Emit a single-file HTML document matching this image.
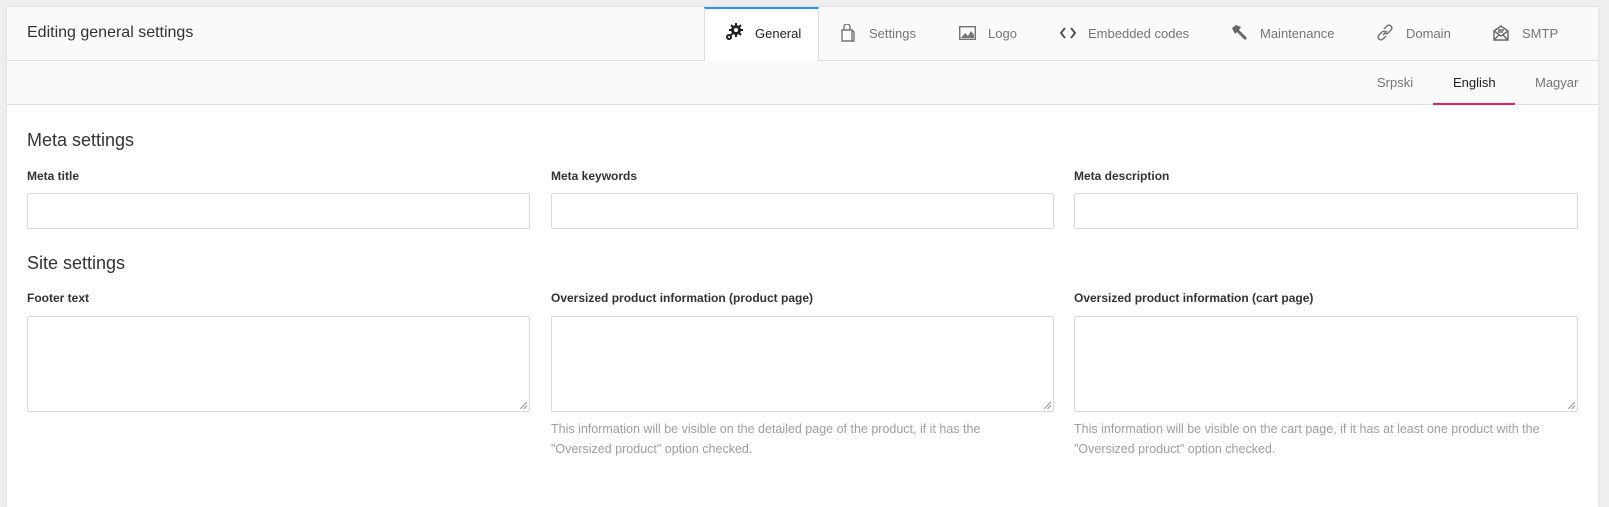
<!DOCTYPE html>
<html><head><meta charset="utf-8"><style>
*{box-sizing:border-box;margin:0;padding:0}
body{width:1609px;height:493px;background:#eeeeee;font-family:"Liberation Sans",sans-serif;position:relative;overflow:hidden;color:#212121}
.card{position:absolute;left:7px;top:7px;width:1591px;height:500px;background:#fff;box-shadow:0 0 2px rgba(0,0,0,.12)}
.hdr{position:absolute;left:0;top:0;width:100%;height:54px;background:#fafafa;border-bottom:1px solid #dedede}
.sub{position:absolute;left:0;top:54px;width:100%;height:44px;background:#fafafa;border-bottom:1px solid #dedede}
.abs{position:absolute;white-space:nowrap}
.title{left:20px;top:17px;font-size:16px;color:#333}
.tab{font-size:13px;color:#757575;top:19px}
.icon{position:absolute;top:18px}
.act{position:absolute;left:697px;top:0;width:115px;height:55px;background:#fff;border-left:1px solid #dedede;border-right:1px solid #dedede;border-top:2px solid #2196f3}
.lang{font-size:13px;color:#757575;top:68px}
h3{position:absolute;font-weight:normal;font-size:18px;color:#333;left:20px}
.lbl{position:absolute;font-size:12px;font-weight:bold;color:#333}
.inp{position:absolute;border:1px solid #d9d9d9;border-radius:2px;background:#fff}
.help{position:absolute;font-size:12.5px;color:#9e9e9e;line-height:20px}
.grip{position:absolute;right:2px;bottom:2px;width:7px;height:7px;background:linear-gradient(135deg,transparent 45%,#999 45%,#999 55%,transparent 55%,transparent 70%,#999 70%,#999 80%,transparent 80%)}
</style></head><body>
<div class="card">
<div class="hdr"></div>
<div class="act"></div>
<div class="sub"></div>
<div class="abs title">Editing general settings</div>

<svg class="icon" style="left:717px;top:15px" width="20" height="20" viewBox="0 0 20 20"><g fill="#222"><circle cx="12" cy="8" r="5"/><circle cx="5" cy="15" r="3"/></g><g stroke="#222" stroke-width="2"><path d="M12 1v14M5 8h14M7 3l10 10M17 3L7 13"/></g><circle cx="12" cy="8" r="2" fill="#fff"/><circle cx="5" cy="15" r="1" fill="#fff"/></svg>
<div class="abs tab" style="left:748px;color:#212121">General</div>

<svg class="icon" style="left:833px;top:17px" width="16" height="18" viewBox="0 0 16 18"><g fill="none" stroke="#757575" stroke-width="1.4"><path d="M2 6h10v11H2z"/><path d="M12 6l2 2v9h-2"/><path d="M4 6V3a3 3 0 0 1 6 0v3"/></g></svg>
<div class="abs tab" style="left:862px">Settings</div>

<svg class="icon" style="left:952px;top:19px" width="17" height="14" viewBox="0 0 17 14"><rect x=".7" y=".7" width="15.6" height="12.6" fill="none" stroke="#757575" stroke-width="1.4"/><path d="M2 12L6 7l3 3 3-5 3 4v3z" fill="#757575"/></svg>
<div class="abs tab" style="left:981px">Logo</div>

<svg class="icon" style="left:1053px;top:20px" width="16" height="12" viewBox="0 0 16 12"><path d="M5 1L1 6l4 5M11 1l4 5-4 5" fill="none" stroke="#555" stroke-width="2"/></svg>
<div class="abs tab" style="left:1081px">Embedded codes</div>

<svg class="icon" style="left:1224px;top:17px" width="17" height="17" viewBox="0 0 17 17"><path d="M1 4l4-3 5 2-2 3 8 8-2 2-8-8-2 2z" fill="#666"/></svg>
<div class="abs tab" style="left:1253px">Maintenance</div>

<svg class="icon" style="left:1370px;top:17px" width="16" height="17" viewBox="0 0 16 17"><g fill="none" stroke="#757575" stroke-width="1.5"><path d="M7 5l3-3a2.5 2.5 0 0 1 4 4l-3 3a2.5 2.5 0 0 1-3.5 0"/><path d="M9 12l-3 3a2.5 2.5 0 0 1-4-4l3-3a2.5 2.5 0 0 1 3.5 0"/><path d="M6 11l4-4"/></g></svg>
<div class="abs tab" style="left:1399px">Domain</div>

<svg class="icon" style="left:1486px;top:17px" width="16" height="17" viewBox="0 0 16 17"><g fill="none" stroke="#666" stroke-width="1.4"><path d="M1 7l7-5 7 5v9H1z"/><path d="M1 7l7 5 7-5M1 16l5-5M15 16l-5-5"/><path d="M5 6h6M5 8h5"/></g></svg>
<div class="abs tab" style="left:1515px">SMTP</div>

<div class="abs lang" style="left:1370px">Srpski</div>
<div class="abs lang" style="left:1446px;color:#212121">English</div>
<div style="position:absolute;left:1426px;top:96px;width:82px;height:2px;background:#e91e63"></div>
<div class="abs lang" style="left:1528px">Magyar</div>

<h3 style="top:123px">Meta settings</h3>
<div class="lbl" style="left:20px;top:162px">Meta title</div>
<div class="lbl" style="left:544px;top:162px">Meta keywords</div>
<div class="lbl" style="left:1067px;top:162px">Meta description</div>
<div class="inp" style="left:20px;top:186px;width:503px;height:36px"></div>
<div class="inp" style="left:544px;top:186px;width:503px;height:36px"></div>
<div class="inp" style="left:1067px;top:186px;width:504px;height:36px"></div>

<h3 style="top:246px">Site settings</h3>
<div class="lbl" style="left:20px;top:284px">Footer text</div>
<div class="lbl" style="left:544px;top:284px">Oversized product information (product page)</div>
<div class="lbl" style="left:1067px;top:284px">Oversized product information (cart page)</div>
<div class="inp" style="left:20px;top:309px;width:503px;height:96px"><div class="grip"></div></div>
<div class="inp" style="left:544px;top:309px;width:503px;height:96px"><div class="grip"></div></div>
<div class="inp" style="left:1067px;top:309px;width:504px;height:96px"><div class="grip"></div></div>
<div class="help" style="left:544px;top:412px">This information will be visible on the detailed page of the product, if it has the<br>"Oversized product" option checked.</div>
<div class="help" style="left:1067px;top:412px">This information will be visible on the cart page, if it has at least one product with the<br>"Oversized product" option checked.</div>
</div>
</body></html>
